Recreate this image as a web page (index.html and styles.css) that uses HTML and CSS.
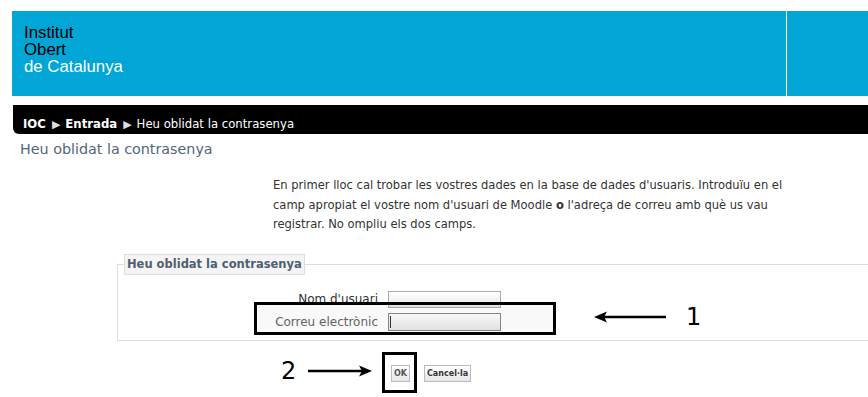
FILE: index.html
```html
<!DOCTYPE html>
<html>
<head>
<link rel="stylesheet" href="styles.css">
</head>
<body>
<div class="header">
  <div class="logo">
    <div class="dark">Institut</div>
    <div class="dark">Obert</div>
    <div class="light">de Catalunya</div>
  </div>
  <div class="header-side"></div>
</div>

<div class="navbar">
  <b>IOC</b><span class="sep">&#9654;</span><b>Entrada</b><span class="sep">&#9654;</span>Heu oblidat la contrasenya
</div>

<h2 class="title">Heu oblidat la contrasenya</h2>

<p class="intro">En primer lloc cal trobar les vostres dades en la base de dades d'usuaris. Introduïu en el camp apropiat el vostre nom d'usuari de Moodle <b>o</b> l'adreça de correu amb què us vau registrar. No ompliu els dos camps.</p>

<fieldset class="box">
  <legend>Heu oblidat la contrasenya</legend>
  <div class="row">
    <label>Nom d'usuari</label>
    <input type="text" class="field">
  </div>
  <div class="row">
    <label>Correu electrònic</label>
    <input type="text" class="field focus">
  </div>
</fieldset>

<div class="buttons">
  <button class="btn ok">OK</button>
  <button class="btn">Cancel·la</button>
</div>

<div class="caret"></div>
<div class="mark mark-row"></div>
<div class="mark mark-ok"></div>

<div class="note note-1">
  <svg width="74" height="12" viewBox="0 0 74 12"><path d="M6 6H72" stroke="#000" stroke-width="2.5"/><path d="M0 6L13 0.5L10 6L13 11.5Z" fill="#000"/></svg>
  <span>1</span>
</div>
<div class="note note-2">
  <span>2</span>
  <svg width="64" height="12" viewBox="0 0 64 12"><path d="M0 6H58" stroke="#000" stroke-width="2.5"/><path d="M64 6L51 0.5L54 6L51 11.5Z" fill="#000"/></svg>
</div>
</body>
</html>
```

FILE: styles.css
```css
html {
overflow: hidden;
}
body {
margin: 0;
padding: 11px 0 0 0;
min-height: 397px;
box-sizing: border-box;
font-family: "DejaVu Sans", Verdana, sans-serif;
background: #fff;
position: relative;
}

.header {
margin-left: 12px;
height: 85px;
background: #02a6d6;
display: grid;
grid-template-columns: 774px 1fr;
}
.logo {
padding: 13px 0 0 12px;
font-family: "Liberation Sans", Arial, sans-serif;
font-size: 16.8px;
line-height: 17px;
}
.logo .dark { color: #000; }
.logo .light { color: #fff; }
.header-side {
border-left: 1px solid #fff;
}

.navbar {
margin: 9px 0 0 13px;
height: 29px;
background: #000;
color: #fff;
font-size: 11.7px;
padding-left: 10px;
border-bottom-left-radius: 6px;
box-sizing: border-box;
line-height: 38px;
}
.navbar .sep {
display: inline-block;
margin: 0 5px 0 6px;
font-size: 11px;
color: #ddd;
}

.title {
margin: 7px 0 0 20px;
font-size: 14.3px;
font-weight: normal;
color: #52677a;
}

.intro {
margin: 18px 0 0 273px;
width: 525px;
font-family: "DejaVu Sans Condensed", "DejaVu Sans", sans-serif;
font-size: 12.8px;
line-height: 19.5px;
color: #333;
}

.box {
margin: 20px 0 0 117px;
padding: 13px 0 6px 0;
border: 1px solid #ddd;
border-right: none;
}
.box legend {
margin-left: 6px;
padding: 2px 2px 3px;
background: #f4f4f4;
border: 1px solid #ddd;
font-size: 11.5px;
font-weight: bold;
color: #4e5f70;
}

.row {
display: flex;
align-items: center;
height: 23px;
}
.row label {
width: 260px;
text-align: right;
padding-right: 10px;
font-size: 12px;
color: #333;
}
.row + .row label {
color: #666;
}
.field {
width: 113px;
height: 17px;
box-sizing: border-box;
border: 1px solid #aaa;
background: linear-gradient(#fff, #e8e8e8);
margin: 0;
padding: 0;
}
.field.focus {
height: 18px;
border-color: #888;
}
.caret {
position: absolute;
left: 390px;
top: 316px;
width: 1px;
height: 12px;
background: #333;
}

.buttons {
margin: 24px 0 0 391px;
display: flex;
gap: 14px;
}
.btn {
font-family: "DejaVu Sans", sans-serif;
font-size: 8px;
font-weight: bold;
color: #333;
height: 17px;
padding: 0 2px;
border: 1px solid #bbb;
background: linear-gradient(#fff, #e6e6e6);
}
.btn.ok {
color: #555;
}

.mark {
position: absolute;
border: 3px solid #000;
box-sizing: border-box;
}
.mark-row {
left: 254px;
top: 302px;
width: 302px;
height: 33px;
background: rgba(0, 0, 0, 0.025);
}
.mark-ok {
left: 382px;
top: 352px;
width: 35px;
height: 41px;
}

.note {
position: absolute;
display: flex;
align-items: center;
font-size: 24px;
color: #000;
}
.note-1 {
left: 594px;
top: 303px;
gap: 18px;
}
.note-2 {
left: 281px;
top: 357px;
gap: 12px;
}
```
